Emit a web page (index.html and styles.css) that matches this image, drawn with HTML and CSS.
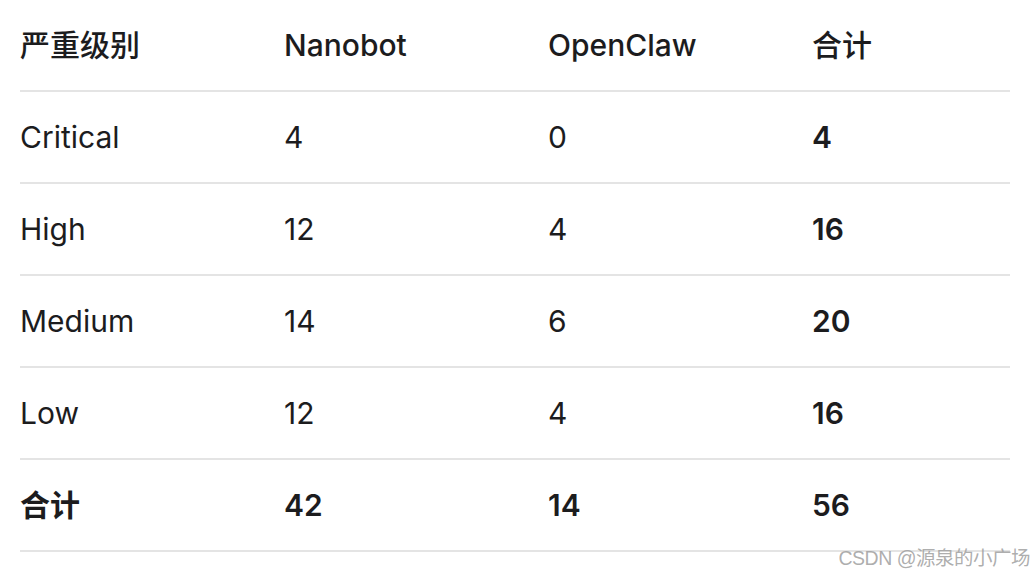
FILE: index.html
```html
<!DOCTYPE html>
<html lang="zh">
<head>
<meta charset="utf-8">
<link rel="stylesheet" href="styles.css">
</head>
<body>
<table class="sev">
  <thead>
    <tr><th>严重级别</th><th>Nanobot</th><th>OpenClaw</th><th>合计</th></tr>
  </thead>
  <tbody>
    <tr><td>Critical</td><td>4</td><td>0</td><td class="b">4</td></tr>
    <tr><td>High</td><td>12</td><td>4</td><td class="b">16</td></tr>
    <tr><td>Medium</td><td>14</td><td>6</td><td class="b">20</td></tr>
    <tr><td>Low</td><td>12</td><td>4</td><td class="b">16</td></tr>
    <tr class="total"><td>合计</td><td>42</td><td>14</td><td>56</td></tr>
  </tbody>
</table>
<div class="watermark">CSDN @源泉的小广场</div>
</body>
</html>
```

FILE: styles.css
```css
html, body {
  margin: 0;
  background: #ffffff;
}
body {
  padding: 0 24px 0 20px;
  font-family: Inter, "Noto Sans CJK SC", sans-serif;
  color: #1c1c1e;
  position: relative;
  height: 574px;
  box-sizing: border-box;
  overflow: hidden;
}
.sev {
  width: 990px;
  border-collapse: collapse;
  table-layout: fixed;
}
.sev th, .sev td {
  text-align: left;
  padding: 0;
  height: 90px;
  font-size: 30px;
  line-height: 36px;
  vertical-align: middle;
  border-bottom: 2px solid #e4e4e4;
}
.sev th:nth-child(1), .sev th:nth-child(2), .sev th:nth-child(3) { width: 264px; }
.sev th { font-weight: 500; }
.sev td { font-weight: 400; }
.sev td.b, .sev tr.total td { font-weight: 600; }
.watermark {
  position: absolute;
  right: 4px;
  top: 542px;
  font-family: "Liberation Sans", "Noto Sans CJK SC", sans-serif;
  font-size: 19.5px;
  color: rgba(160,160,160,0.85);
  letter-spacing: -0.5px;
}
```
